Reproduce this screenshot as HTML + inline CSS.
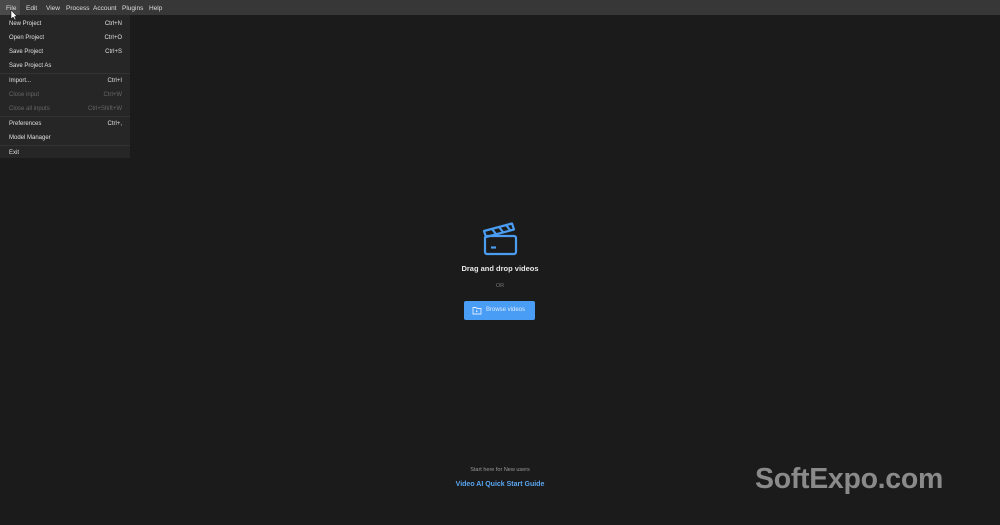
<!DOCTYPE html>
<html><head><style>
*{margin:0;padding:0;box-sizing:border-box}
body{width:1000px;height:525px;background:#1b1b1b;font-family:"Liberation Sans",sans-serif;position:relative;overflow:hidden;color:#ddd}
.bar{position:absolute;left:0;top:0;width:1000px;height:15px;background:#373737}
.bar span{position:absolute;top:4.5px;font-size:6.5px;color:#ddd}
.menu{position:absolute;left:0;top:15px;width:130px;height:143px;background:#262626}
.it{position:absolute;left:9px;width:113px;font-size:6px;color:#e0e0e0}
.it b{font-weight:normal;position:absolute;right:0}
.dis{color:#666}
.sep{position:absolute;left:0;width:130px;height:1px;background:#333}
</style></head><body>
<div class="bar">
<div style="position:absolute;left:0;top:0;width:20px;height:15px;background:#4a4a4a"></div>
<span style="left:6px">File</span><span style="left:26px">Edit</span><span style="left:46px">View</span><span style="left:66px">Process</span><span style="left:93px">Account</span><span style="left:122px">Plugins</span><span style="left:149px">Help</span>
</div>
<div class="menu">
<div class="it" style="top:5.5px">New Project<b>Ctrl+N</b></div>
<div class="it" style="top:19.5px">Open Project<b>Ctrl+O</b></div>
<div class="it" style="top:33.5px">Save Project<b>Ctrl+S</b></div>
<div class="it" style="top:47.5px">Save Project As</div>
<div class="sep" style="top:58px"></div>
<div class="it" style="top:62.5px">Import...<b>Ctrl+I</b></div>
<div class="it dis" style="top:76.5px">Close input<b>Ctrl+W</b></div>
<div class="it dis" style="top:90.5px">Close all inputs<b>Ctrl+Shift+W</b></div>
<div class="sep" style="top:101px"></div>
<div class="it" style="top:105.5px">Preferences<b>Ctrl+,</b></div>
<div class="it" style="top:119.5px">Model Manager</div>
<div class="sep" style="top:130px"></div>
<div class="it" style="top:134.5px">Exit</div>
</div>
<svg style="position:absolute;left:0;top:0" width="1000" height="525">
<path d="M11 10 L11 19 L13 17 L15 20 L16 19.5 L14.5 16.5 L17 16.5 Z" fill="#fff" stroke="#000" stroke-width="0.5"/>
<g fill="none" stroke="#4a9df0" stroke-width="2.2" stroke-linejoin="round">
<rect x="485" y="236" width="31" height="18" rx="2"/>
<path d="M484 231 L512 223.5 L514 229.5 L486 237 Z"/>
<path d="M492 229 L496 234 M499 227 L503 232 M506 225 L510 230"/>
<path d="M491 247.5 L496 247.5"/>
</g>
</svg>
<div style="position:absolute;left:0;width:1000px;top:264px;text-align:center;font-size:7.5px;font-weight:bold;color:#e8e8e8">Drag and drop videos</div>
<div style="position:absolute;left:0;width:1000px;top:283px;text-align:center;font-size:5.5px;color:#777">OR</div>
<div style="position:absolute;left:464px;top:301px;width:71px;height:19px;background:#4a9df5;border-radius:2px;color:#dceaff;font-size:6px;line-height:19px;padding-left:22px">Browse videos</div>
<svg style="position:absolute;left:472px;top:306px" width="10" height="9"><path d="M1 1.5 H4 L5 2.5 H9 V8 H1 Z" fill="none" stroke="#dceaff" stroke-width="0.9"/><path d="M4 4 L6 5.2 L4 6.4Z" fill="#dceaff"/></svg>
<div style="position:absolute;left:0;width:1000px;top:467px;text-align:center;font-size:5.5px;color:#999">Start here for New users</div>
<div style="position:absolute;left:0;width:1000px;top:481px;text-align:center;font-size:7px;font-weight:bold;color:#5aa7f2">Video AI Quick Start Guide</div>
<div style="position:absolute;left:755px;top:463px;font-size:28.5px;font-weight:bold;color:#8a8a8a;letter-spacing:-0.3px">SoftExpo.com</div>
</body></html>
